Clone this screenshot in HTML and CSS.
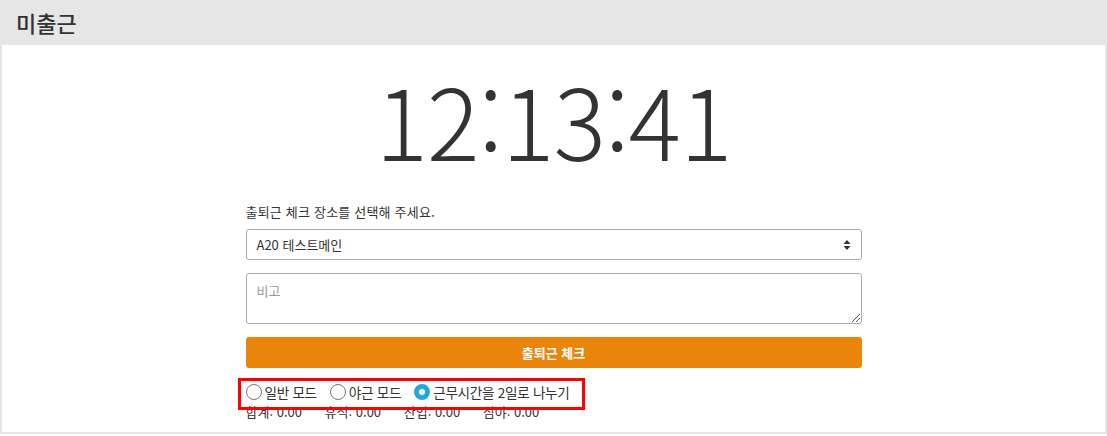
FILE: index.html
```html
<!DOCTYPE html>
<html lang="ko">
<head>
    <meta charset="UTF-8">
    <title>미출근</title>
    <link rel="stylesheet" href="styles.css">
</head>
<body>
<div class="panel">
    <div class="panel-head">미출근</div>
    <div class="panel-body">
        <div class="clock">12:13:41</div>
        <div class="form">
            <label class="form-label">출퇴근 체크 장소를 선택해 주세요.</label>
            <div class="select">
                <span>A20 테스트메인</span>
                <svg class="caret" width="8" height="12" viewBox="0 0 8 12">
                    <path d="M4 1 L7.5 5 L0.5 5 Z M4 11 L7.5 7 L0.5 7 Z" fill="#333"/>
                </svg>
            </div>
            <div class="memo">
                <span class="placeholder">비고</span>
                <svg class="grip" width="9" height="9" viewBox="0 0 9 9">
                    <path d="M9 1 L1 9 M9 5 L5 9" stroke="#555" stroke-width="1"/>
                </svg>
            </div>
            <button class="btn-check" type="button">출퇴근 체크</button>
            <div class="modes">
                <label class="radio"><span class="dot"></span>일반 모드</label>
                <label class="radio"><span class="dot"></span>야근 모드</label>
                <label class="radio on"><span class="dot"></span>근무시간을 2일로 나누기</label>
            </div>
            <div class="sums">
                <span>합계: 0.00</span>
                <span>휴식: 0.00</span>
                <span>잔업: 0.00</span>
                <span>심야: 0.00</span>
            </div>
            <div class="mark"></div>
        </div>
    </div>
</div>
</body>
</html>
```
FILE: styles.css
```css
body {
    margin: 0;
    font-family: "Noto Sans CJK KR", "Noto Sans", sans-serif;
    color: #333;
}

.panel {
    border: 2px solid #e6e6e6;
    border-top: 0;
    height: 432px;
    overflow: hidden;
    width: 1103px;
}

.panel-head {
    background: #e6e6e6;
    height: 45px;
    line-height: 45px;
    padding-left: 14px;
    font-size: 22px;
    font-weight: 500;
    color: #333;
}

.panel-body {
    background: #fff;
}

.clock {
    text-align: center;
    font-size: 98px;
    font-weight: 300;
    line-height: 1;
    padding-top: 24px;
    height: 150px;
    box-sizing: border-box;
    letter-spacing: -1px;
}

.form {
    width: 616px;
    margin: 0 auto;
    position: relative;
}

.form-label {
    display: block;
    font-size: 13px;
    margin: 7px 0 7px;
    line-height: 20px;
    letter-spacing: 0.2px;
}

.select {
    height: 31px;
    border: 1px solid #aaa;
    border-radius: 3px;
    display: flex;
    align-items: center;
    justify-content: space-between;
    padding: 0 10px;
    font-size: 13px;
    box-sizing: border-box;
}

.memo {
    margin-top: 13px;
    height: 51px;
    border: 1px solid #aaa;
    border-radius: 3px;
    box-sizing: border-box;
    position: relative;
    padding: 7px 10px;
    font-size: 13px;
}

.placeholder {
    color: #999;
}

.grip {
    position: absolute;
    right: 1px;
    bottom: 1px;
}

.btn-check {
    display: block;
    width: 100%;
    margin-top: 13px;
    height: 31px;
    border: 0;
    border-radius: 3px;
    background: #e9850b;
    color: #fff;
    font-family: inherit;
    font-size: 13px;
    font-weight: 700;
}

.modes {
    display: flex;
    gap: 13px;
    margin-top: 15px;
    font-size: 13.6px;
    letter-spacing: -0.3px;
    line-height: 18px;
}

.radio {
    display: flex;
    align-items: center;
    gap: 3px;
}

.dot {
    width: 14px;
    height: 14px;
    border: 1px solid #777;
    border-radius: 50%;
    display: inline-block;
}

.radio.on .dot {
    width: 6px;
    height: 6px;
    border: 5px solid #21a9d6;
    background: #fff;
}

.sums {
    font-size: 13px;
    line-height: 16px;
    margin-top: 3px;
}

.sums span {
    margin-right: 19px;
}

.mark {
    position: absolute;
    left: -8px;
    top: 176px;
    width: 341px;
    height: 26px;
    border: 3px solid #f00;
}
```
